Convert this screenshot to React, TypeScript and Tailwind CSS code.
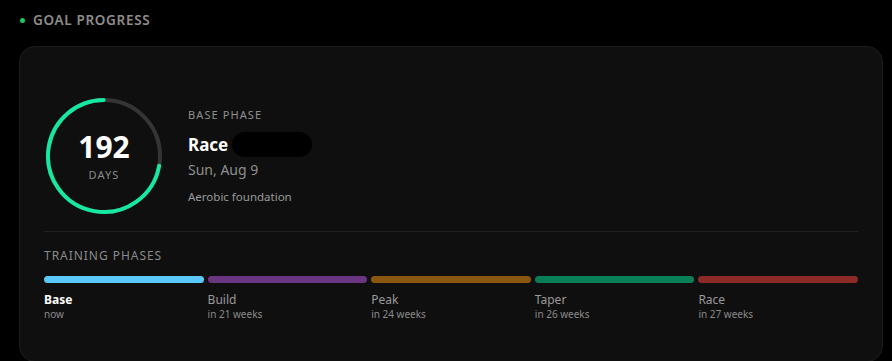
import React from "react";

const phases = [
  { name: "Base", when: "now", color: "bg-[#5ac8fa]", active: true },
  { name: "Build", when: "in 21 weeks", color: "bg-[#6a3681]", active: false },
  { name: "Peak", when: "in 24 weeks", color: "bg-[#8a5710]", active: false },
  { name: "Taper", when: "in 26 weeks", color: "bg-[#087f57]", active: false },
  { name: "Race", when: "in 27 weeks", color: "bg-[#8b2a26]", active: false },
];

function CountdownRing() {
  const r = 56;
  const c = 2 * Math.PI * r;
  const progress = 0.72;
  return (
    <div className="relative h-[118px] w-[118px] shrink-0">
      <svg width="118" height="118" viewBox="0 0 118 118">
        <circle cx="59" cy="59" r={r} fill="none" stroke="#353535" strokeWidth="4" />
        <circle
          cx="59"
          cy="59"
          r={r}
          fill="none"
          stroke="#16e8a0"
          strokeWidth="4"
          strokeLinecap="round"
          strokeDasharray={`${c * progress} ${c}`}
          transform="rotate(10 59 59)"
        />
      </svg>
      <div className="absolute inset-0 flex flex-col items-center justify-center">
        <span className="text-[30px] font-bold leading-none text-white">192</span>
        <span className="mt-[7px] text-[11px] leading-none tracking-[0.1em] text-[#8a8a8a]">DAYS</span>
      </div>
    </div>
  );
}

export default function App() {
  return (
    <div
      className="h-[361px] w-full overflow-hidden bg-black px-[19px] pt-[10px]"
      style={{ fontFamily: '"Noto Sans", "Open Sans", sans-serif' }}
    >
      <div className="flex h-[20px] items-center gap-[8px] pl-[1px]">
        <span className="h-[5px] w-[5px] rounded-full bg-[#22c55e]" />
        <span className="text-[13.5px] font-semibold tracking-[0.05em] text-[#8c8c8c]">GOAL PROGRESS</span>
      </div>

      <div className="mt-[16px] h-[316px] w-[864px] rounded-[16px] border border-[#1d1d1d] bg-[#0f0f0f] px-[24px] pt-[50px]">
        <div className="flex items-center gap-[25px] pl-[1px]">
          <CountdownRing />
          <div className="flex flex-col">
            <span className="text-[11px] leading-none tracking-[0.1em] text-[#8f8f8f]">BASE PHASE</span>
            <div className="mt-[12px] flex items-center">
              <span className="text-[17px] font-bold leading-none text-white">Race</span>
              <span className="ml-[4px] h-[25px] w-[80px] rounded-full bg-black" />
            </div>
            <span className="mt-[6px] text-[14px] leading-none text-[#8f8f8f]">Sun, Aug 9</span>
            <span className="mt-[14px] text-[11.5px] leading-none text-[#9a9a9a]">Aerobic foundation</span>
          </div>
        </div>

        <div className="mt-[16px] h-px bg-[#202020]" />

        <div className="mt-[18px] text-[12px] leading-none tracking-[0.08em] text-[#8a8a8a]">TRAINING PHASES</div>

        <div className="mt-[14px] grid grid-cols-5 gap-[4px]">
          {phases.map((p) => (
            <div key={p.name} className="flex flex-col">
              <div className={`h-[7px] rounded-full ${p.color}`} />
              <span
                className={`mt-[11px] text-[12px] leading-none ${p.active ? "font-bold text-white" : "text-[#9a9a9a]"}`}
              >
                {p.name}
              </span>
              <span className="mt-[3px] text-[10px] leading-none text-[#8a8a8a]">{p.when}</span>
            </div>
          ))}
        </div>
      </div>
    </div>
  );
}
